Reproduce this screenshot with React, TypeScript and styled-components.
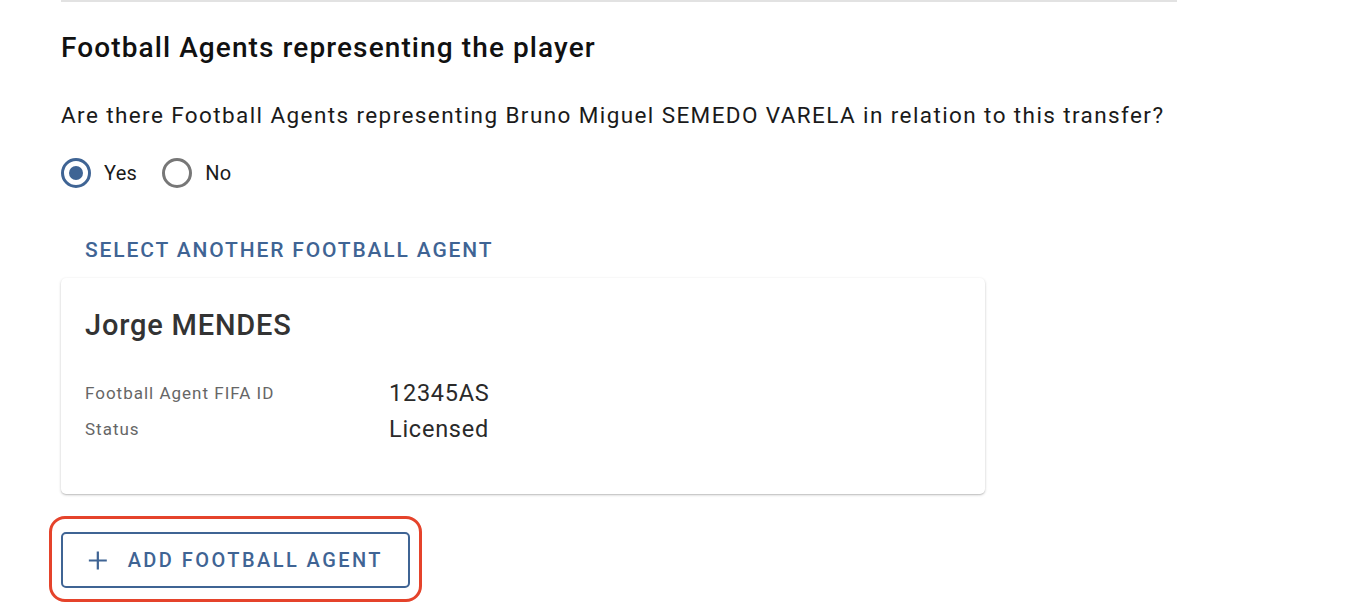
import React from "react";
import styled, { createGlobalStyle } from "styled-components";

const GlobalStyle = createGlobalStyle`
  html, body {
    margin: 0;
    padding: 0;
    background: #ffffff;
    font-family: Roboto, "Liberation Sans", sans-serif;
  }
`;

const Page = styled.div`
  width: 1116px;
  margin-left: 61px;
  display: flex;
  flex-direction: column;
  align-items: flex-start;
`;

const Divider = styled.hr`
  width: 100%;
  margin: 0;
  border: none;
  border-top: 2px solid #e2e2e2;
`;

const Heading = styled.h2`
  margin: 29px 0 0;
  font-size: 28px;
  line-height: 34px;
  font-weight: 500;
  letter-spacing: 1.1px;
  color: #111111;
`;

const Question = styled.p`
  margin: 34px 0 0;
  font-size: 22.5px;
  line-height: 32px;
  letter-spacing: 1.4px;
  color: #1a1a1a;
`;

const RadioGroup = styled.div`
  display: flex;
  align-items: center;
  gap: 25px;
  margin-top: 27px;
`;

const RadioLabel = styled.label`
  display: flex;
  align-items: center;
  gap: 13px;
  font-size: 20px;
  line-height: 30px;
  letter-spacing: 0.3px;
  color: #1a1a1a;
  cursor: pointer;
`;

const RadioCircle = styled.span<{ $checked: boolean }>`
  width: 30px;
  height: 30px;
  box-sizing: border-box;
  border-radius: 50%;
  border: 3px solid ${(p) => (p.$checked ? "#3f6494" : "#777777")};
  display: grid;
  place-items: center;

  &::after {
    content: "";
    width: 14px;
    height: 14px;
    border-radius: 50%;
    background: ${(p) => (p.$checked ? "#3f6494" : "transparent")};
  }
`;

const TextButton = styled.button`
  margin: 50px 0 0 14px;
  padding: 0 10px;
  border: none;
  background: none;
  font-family: inherit;
  font-size: 21px;
  line-height: 24px;
  font-weight: 500;
  letter-spacing: 1.85px;
  color: #3f6494;
  text-transform: uppercase;
  cursor: pointer;
`;

const Card = styled.div`
  margin-top: 16px;
  width: 924px;
  height: 216px;
  box-sizing: border-box;
  border-radius: 5px;
  background: #ffffff;
  box-shadow: 0 1px 3px 0 rgba(0, 0, 0, 0.2), 0 1px 1px 0 rgba(0, 0, 0, 0.1);
  padding: 30px 24px;
`;

const AgentName = styled.h3`
  margin: 0;
  font-size: 29px;
  line-height: 34px;
  font-weight: 500;
  letter-spacing: 0.8px;
  color: #333333;
`;

const InfoGrid = styled.div`
  margin-top: 35px;
  display: grid;
  grid-template-columns: 304px auto;
  row-gap: 4px;
  align-items: center;
`;

const InfoLabel = styled.span`
  font-size: 17px;
  line-height: 32px;
  letter-spacing: 1px;
  color: #666666;
`;

const InfoValue = styled.span`
  font-size: 23.5px;
  line-height: 32px;
  letter-spacing: 0.75px;
  color: #2a2a2a;
`;

const Highlight = styled.div`
  margin: 22px 0 0 -12px;
  padding: 13px 9px 11px;
  border: 3px solid #e5432b;
  border-radius: 16px;
`;

const OutlinedButton = styled.button`
  display: flex;
  align-items: center;
  gap: 20px;
  height: 56px;
  width: 349px;
  box-sizing: border-box;
  padding: 0 25px;
  border: 2px solid #3f6494;
  border-radius: 5px;
  background: #ffffff;
  font-family: inherit;
  font-size: 20px;
  font-weight: 500;
  letter-spacing: 2.45px;
  color: #3f6494;
  text-transform: uppercase;
  white-space: nowrap;
  cursor: pointer;
`;

const PlusIcon = () => (
  <svg width="23" height="23" viewBox="0 0 23 23" aria-hidden="true">
    <path d="M11.5 1v21M1 11.5h21" stroke="#3f6494" strokeWidth="2.6" fill="none" />
  </svg>
);

export default function App() {
  return (
    <>
      <GlobalStyle />
      <Page>
        <Divider />
        <Heading>Football Agents representing the player</Heading>
        <Question>
          Are there Football Agents representing Bruno Miguel SEMEDO VARELA in relation to this
          transfer?
        </Question>
        <RadioGroup>
          <RadioLabel>
            <RadioCircle $checked />
            Yes
          </RadioLabel>
          <RadioLabel>
            <RadioCircle $checked={false} />
            No
          </RadioLabel>
        </RadioGroup>
        <TextButton>Select another football agent</TextButton>
        <Card>
          <AgentName>Jorge MENDES</AgentName>
          <InfoGrid>
            <InfoLabel>Football Agent FIFA ID</InfoLabel>
            <InfoValue>12345AS</InfoValue>
            <InfoLabel>Status</InfoLabel>
            <InfoValue>Licensed</InfoValue>
          </InfoGrid>
        </Card>
        <Highlight>
          <OutlinedButton>
            <PlusIcon />
            Add football agent
          </OutlinedButton>
        </Highlight>
      </Page>
    </>
  );
}
